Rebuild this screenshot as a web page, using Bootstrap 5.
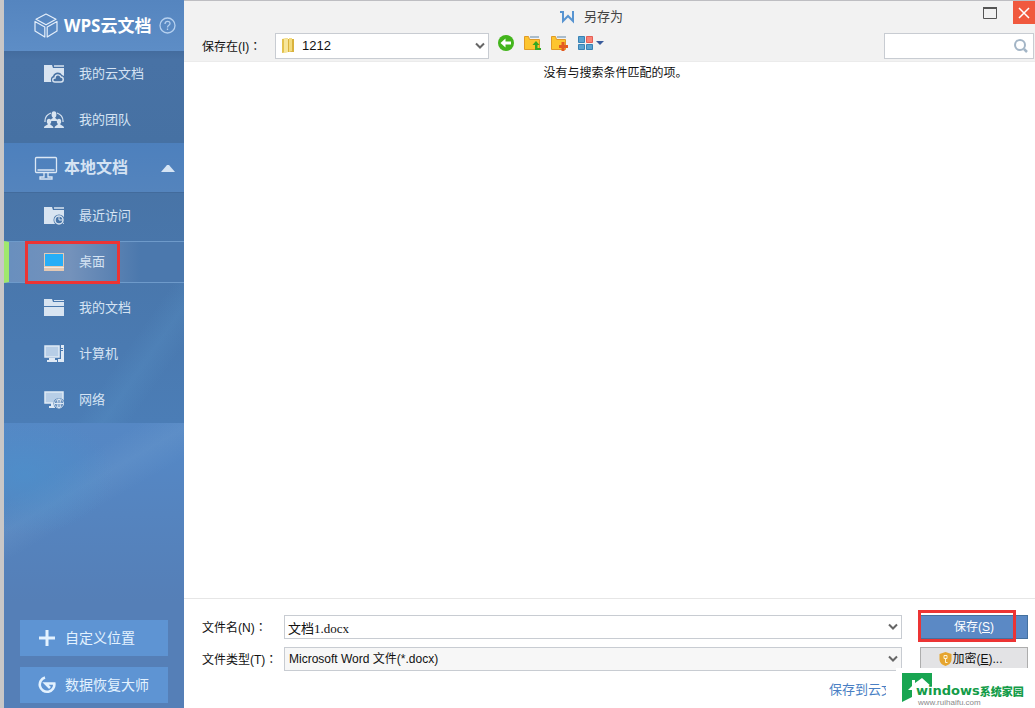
<!DOCTYPE html>
<html lang="zh-CN">
<head>
<meta charset="utf-8">
<meta name="viewport" content="width=device-width, initial-scale=1">
<title>另存为</title>
<link href="https://cdn.jsdelivr.net/npm/bootstrap@5.3.0/dist/css/bootstrap.min.css" rel="stylesheet">
<style>
body{font:12px/18px "Liberation Sans","Noto Sans CJK SC",sans-serif;color:#111;background:#fff}
svg{display:block;flex:none}
.edge{border-left:4px solid #c9c7c7}
.side{width:180px;color:#d5e3f3;background:
 radial-gradient(ellipse 90px 60px at 20px 475px,rgba(75,146,205,.6),transparent),
 linear-gradient(150deg,transparent 40%,rgba(120,165,210,.22) 50%,transparent 60%) 0 380px/100% 200px no-repeat,
 linear-gradient(#5b8cc5,#5587c4 65%,#557fb7 85%)}
.side a{color:inherit;text-decoration:none}
.side-head{height:50px;padding:0 8px 0 30px;gap:6px;font-size:16px;font-weight:700}
.side-head.cloud{height:51px;color:#fff;background:linear-gradient(#5585bf,#5d8dc6);font-family:"Open Sans","Noto Sans CJK SC",sans-serif;font-size:17px}
.side-head.local{background:linear-gradient(#4d80bd,#5484bd);border-bottom:1px solid #426b9c}
.side-group{background:linear-gradient(#446c9e,#4872a5 10%,#4671a3)}
.side-group.places{background:linear-gradient(125deg,transparent 68%,rgba(95,155,205,.2) 76%,transparent 84%),linear-gradient(#4874a7,#4b7db6)}
.side-item{height:46px;padding-left:40px;gap:15px;font-size:13px}
.side-item.current{height:42px;margin:2px 0;padding-left:35px;border:solid #6e9aca;border-width:1px 0;border-left:5px solid #a0e86c;background:linear-gradient(90deg,#698fbe,#7492bb 35%,#4b78ad 75%)}
.mark-box{border:3px solid #ec3434;pointer-events:none}
.mark-place{left:21px;top:0;width:95px;height:43px}
.mark-save{left:-2px;right:12px;top:-5px;height:32px}
.side-btn{height:36px;margin:0 16px;padding:0 18px;gap:9px;background:#5e94d3;color:#e3f2ff;font-size:14px;border:0;border-radius:0}
.side-foot{gap:11px;padding-bottom:5px}
.top-pane{background:#f2f2f2;border-top:1px solid #bebec2;border-bottom:1px solid #ebebeb;height:62px}
.title-row{height:32px;padding-right:36px;font-size:13px;color:#444}
.title-row .window-set{gap:12px}
.tool-row{padding:0 1px 0 18px}
.tool-row label{width:73px}
.tools{gap:10px;padding:0 0 6px 9px}
.colon{font-family:"Noto Sans CJK TC",sans-serif}
.field{height:26px;border:1px solid #c8ccd2;border-radius:0;background-color:#fff;font-size:12px;line-height:18px;color:#111}
.pick{appearance:none;background:#fff url("data:image/svg+xml,%3Csvg xmlns='http://www.w3.org/2000/svg' width='10' height='8'%3E%3Cpath d='M1 1.5l4 4 4-4' fill='none' stroke='%23666' stroke-width='2'/%3E%3C/svg%3E") no-repeat right 3px center}
.pick-folder{width:214px;padding:0 20px 0 26px;font-size:13px}
.folder-ico{left:6px;top:4px}
.tool-btn{background:none;border:0;padding:0}
.window-btn{width:22px;height:23px;border:0;padding:0;background:none}
.window-btn.shut{background:#f0593e}
.find{width:150px}
.notice{padding:2px 0 0 12px}
.bottom-pane{border-top:1px solid #e6e6e6;height:110px;padding:16px 7px 0 18px}
.form-line{height:24px;margin-bottom:8px}
.form-line label{width:82px}
.bottom-pane .field{height:24px}
.file-name{font-family:"Liberation Serif","Noto Sans CJK SC",serif;font-size:13px;padding:0 3px}
.file-type{background-color:#f7f7f7;padding:0 20px 0 4px}
.act{width:108px;height:24px;border-radius:0;font-size:12px;line-height:18px;padding:0}
.act-wrap{margin-left:18px}
.act.save,.act.save:hover{background:#5b89c5;color:#fff;border:1px solid #44719f}
.act.lock,.act.lock:hover{background:#e3e3e5;color:#111;border:1px solid #adadad;padding-right:6px}
.cloud-link{width:57px;margin:2px 142px 0 0;font-size:13px;color:#4a7fc4;text-decoration:none}
.site-tag{right:0;bottom:0;width:139px;height:40px;padding:16px 0 0 20px;background:#fff}
.site-logo{left:6px;top:5px}
.site-name{font:700 13px/14px "DejaVu Sans",sans-serif;color:#139c48}
.site-name span{font:900 11px/14px "Noto Sans CJK SC",sans-serif}
.site-url{padding-left:2px;font-size:8px;line-height:9px;color:#8a8a8a}
</style>
</head>
<body>
<div class="edge d-flex vh-100 overflow-hidden">
<nav class="side d-flex flex-column flex-shrink-0">
  <a href="#" class="side-head cloud d-flex align-items-center">
    <svg width="24" height="25" viewBox="0 0 24 25" fill="none" stroke="#e4eefa" stroke-width="1.200" stroke-linejoin="round"><path d="M12 1l10 5.200-10 5.600L2 6.200zM1 8.500v9.500l9.800 6V14zM23 8.500v9.500l-9.800 6V14z"/></svg>
    <span class="me-auto text-nowrap">WPS云文档</span>
    <svg width="17" height="17" viewBox="0 0 17 17" fill="none" stroke="#b5d0ef" stroke-width="1.300"><circle cx="8.500" cy="8.500" r="7.500"/><path d="M6 7c0-3.500 5-3.500 5-.5 0 2-2.500 1.700-2.500 4M8.500 11.500v1.500"/></svg>
  </a>
  <div class="side-group">
    <a href="#" class="side-item d-flex align-items-center"><svg width="20" height="18" viewBox="0 0 20 18"><path fill="#d8e4f1" d="M0 0h8l1 3h11v14H0z"/><path stroke="#d8e4f1" stroke-width="1.500" d="M10 1h10"/><path fill="#4771a3" d="M8 18c-2-3-1-6 1-7 1-4 7-5 9-1l2 1v7z"/><path fill="none" stroke="#d8e4f1" stroke-width="1.400" d="M11 17c-3 0-3-4 0-4 0-4 5-4 6-1 3 0 3 5 0 5z"/></svg>我的云文档</a>
    <a href="#" class="side-item d-flex align-items-center"><svg width="20" height="18" viewBox="0 0 20 18" fill="#d8e4f1"><path d="M1 11a9 9 0 0 1 6-9M19 11a9 9 0 0 0-6-9" fill="none" stroke="#d8e4f1" stroke-width="1.200"/><ellipse cx="10" cy="3.500" rx="2.400" ry="3.200"/><path d="M6 10c0-2 3-2 3-4h2c0 2 3 2 3 4z"/><ellipse cx="5" cy="10.500" rx="2.200" ry="2.800"/><ellipse cx="15" cy="10.500" rx="2.200" ry="2.800"/><path d="M0 17c0-3 3-2 4-4h2c1 2 3 1 3.500 4zM10.500 17c.5-3 2.500-2 3.500-4h2c1 2 4 1 4 4z"/></svg>我的团队</a>
  </div>
  <a href="#" class="side-head local d-flex align-items-center">
    <svg width="24" height="24" viewBox="0 0 24 24" fill="none" stroke="#dce8f5" stroke-width="1.300"><rect x="1.500" y="1.500" width="21" height="15" rx="1"/><path d="M3.500 14h17M10 17v4H6v2h12v-2h-4v-4"/></svg>
    <span class="me-auto">本地文档</span>
    <svg width="16" height="8" viewBox="0 0 16 8"><path fill="#d5e4f4" d="M1 8l6-7h2l6 7z"/></svg>
  </a>
  <div class="side-group places">
    <a href="#" class="side-item d-flex align-items-center"><svg width="20" height="18" viewBox="0 0 20 18"><path fill="#d8e4f1" d="M0 0h8l1 3h11v14H0z"/><path stroke="#d8e4f1" stroke-width="1.500" d="M10 1h10"/><circle cx="15" cy="13" r="5.500" fill="#4875a8"/><circle cx="15" cy="13" r="4" fill="none" stroke="#d8e4f1" stroke-width="1.500"/><path d="M15 10v3h3" fill="none" stroke="#d8e4f1"/></svg>最近访问</a>
    <div class="position-relative"><a href="#" class="side-item current d-flex align-items-center"><svg width="20" height="18" viewBox="0 0 20 18"><path fill="#e3c9b4" d="M0 0h20v18H0z"/><path fill="#27aef7" d="M1 1h18v12H1z"/><path stroke="#f4e8dc" d="M0 14.500h20"/></svg>桌面</a><span class="mark-box mark-place position-absolute"></span></div>
    <a href="#" class="side-item d-flex align-items-center"><svg width="20" height="18" viewBox="0 0 20 18" fill="#d8e4f1"><path d="M0 0h8l1 3h11v4H0zM10 1h10v1H10zM0 8h20v9H0z"/></svg>我的文档</a>
    <a href="#" class="side-item d-flex align-items-center"><svg width="20" height="18" viewBox="0 0 20 18"><path fill="#b7cee7" stroke="#e0eaf5" stroke-width="1.500" d="M1 1h14v11H1z"/><path fill="#e0eaf5" d="M5 13h6v2h2v2H3v-2h2zM17 0h3v17h-6v-3h3z"/><path stroke="#4a79b0" d="M17 3.500h2M17 5.500h2"/></svg>计算机</a>
    <a href="#" class="side-item d-flex align-items-center"><svg width="20" height="18" viewBox="0 0 20 18"><path fill="#b7cee7" stroke="#e0eaf5" stroke-width="1.500" d="M1 1h18v11H1z"/><path fill="#e0eaf5" d="M7 12h4v5H5v-2h2z"/><circle cx="15" cy="12.500" r="5.500" fill="#4a7ab2"/><g fill="none" stroke="#e0eaf5"><circle cx="15" cy="12.500" r="4.500"/><ellipse cx="15" cy="12.500" rx="2" ry="4.500"/><path d="M10.500 12.500h9M15 8v9"/></g></svg>网络</a>
  </div>
  <div class="side-foot mt-auto d-flex flex-column">
    <button type="button" class="side-btn d-flex align-items-center"><svg width="18" height="18" viewBox="0 0 18 18"><path stroke="#e3f2ff" stroke-width="3" d="M9 1v16M1 9h16"/></svg>自定义位置</button>
    <button type="button" class="side-btn d-flex align-items-center"><svg width="18" height="18" viewBox="0 0 18 18"><path fill="none" stroke="#e3f2ff" stroke-width="2.600" d="M7 1.500a7.300 7.300 0 1 0 9.300 6H7.500l4.500 4.500"/></svg>数据恢复大师</button>
  </div>
</nav>
<main class="flex-grow-1 d-flex flex-column">
  <header class="top-pane position-relative">
    <div class="title-row d-flex align-items-center">
      <div class="flex-fill d-flex justify-content-center align-items-center"><svg class="me-2" width="16" height="14" viewBox="0 0 16 14"><path fill="none" stroke="#5794d1" stroke-width="2" d="M0 2h3v9l5-5 5 5V1"/></svg><span>另存为</span></div>
      <div class="window-set d-flex position-absolute top-0 end-0">
        <button type="button" class="window-btn d-flex align-items-center justify-content-center" aria-label="最大化"><svg width="14" height="12" viewBox="0 0 14 12"><path fill="none" stroke="#555" d="M.5 1.500h13v10H.5z"/><path stroke="#555" stroke-width="2" d="M0 1h14"/></svg></button>
        <button type="button" class="window-btn shut d-flex align-items-center justify-content-center" aria-label="关闭"><svg width="12" height="12" viewBox="0 0 12 12"><path stroke="#fff" stroke-width="1.500" d="M1 1l10 10M11 1L1 11"/></svg></button>
      </div>
    </div>
    <div class="tool-row d-flex align-items-center">
      <label for="where" class="flex-shrink-0">保存在(I)<span class="colon" lang="zh-TW">：</span></label>
      <div class="position-relative"><select id="where" class="field pick pick-folder d-block"><option>1212</option></select>
        <svg class="folder-ico position-absolute" width="14" height="17" viewBox="0 0 14 17"><path fill="#e3c24f" d="M1 2l6-1v14l-6 1z"/><path fill="#f7e69b" d="M3 2l4-1v14l-4 1z"/><path fill="#d9b23d" d="M7 2h6v13H7z"/><path fill="#f3dc80" d="M8 1h3v13l-3 1z"/></svg></div>
      <div class="tools d-flex align-items-center">
        <button type="button" class="tool-btn" aria-label="后退"><svg width="16" height="16" viewBox="0 0 16 16"><circle cx="8" cy="8" r="8" fill="#43b51c"/><path fill="#fff" d="M2.500 8l5-4.500v3H13v3H7.500v3z"/></svg></button>
        <button type="button" class="tool-btn" aria-label="向上"><svg width="17" height="16" viewBox="0 0 17 16"><path fill="#fdc52f" stroke="#e09a26" d="M.5 1.500h4l1 3h10v10H.5z"/><path stroke="#a9bccb" stroke-width="2" d="M6 2h9"/><path fill="#36a823" d="M12 6l3.500 4h-2v3H17v2h-6v-5H8.500z"/></svg></button>
        <button type="button" class="tool-btn" aria-label="新建文件夹"><svg width="17" height="16" viewBox="0 0 17 16"><path fill="#fdc52f" stroke="#e09a26" d="M.5 1.500h4l1 3h9v10H.5z"/><path stroke="#a9bccb" stroke-width="2" d="M6 2h9"/><path stroke="#e35b20" stroke-width="3" d="M12 7v9M8 11.500h9"/></svg></button>
        <button type="button" class="tool-btn" aria-label="视图"><svg width="26" height="16" viewBox="0 0 26 16"><path fill="#5ba3d0" stroke="#3982b4" d="M.5 1.500h6v6h-6zM.5 9.500h6v5h-6zM8.500 9.500h6v5h-6z"/><path fill="#fa8376" stroke="#e55f55" d="M8.500 1.500h6v6h-6z"/><path fill="#3a5c9c" d="M18 6h8l-4 4z"/></svg></button>
      </div>
      <div class="find field d-flex align-items-center ms-auto"><input class="border-0 bg-transparent flex-fill w-100" type="text" aria-label="搜索"><svg class="me-1" width="16" height="16" viewBox="0 0 16 16" fill="none" stroke="#a3b5c6" stroke-width="2"><circle cx="7" cy="7" r="5"/><path stroke-width="2.500" d="M11 11l3 3"/></svg></div>
    </div>
  </header>
  <section class="notice flex-grow-1 text-center"><p class="m-0">没有与搜索条件匹配的项。</p></section>
  <footer class="bottom-pane position-relative">
    <div class="form-line d-flex align-items-center">
      <label for="fname">文件名(N)<span class="colon" lang="zh-TW">：</span></label>
      <input id="fname" class="field pick file-name flex-fill" value="文档1.docx">
      <div class="act-wrap position-relative"><button type="button" class="btn act save d-block">保存(<u>S</u>)</button><span class="mark-box mark-save position-absolute"></span></div>
    </div>
    <div class="form-line d-flex align-items-center">
      <label for="ftype">文件类型(T)<span class="colon" lang="zh-TW">：</span></label>
      <select id="ftype" class="field pick file-type flex-fill"><option>Microsoft Word 文件(*.docx)</option></select>
      <div class="act-wrap"><button type="button" class="btn act lock d-flex align-items-center justify-content-center"><svg width="13" height="14" viewBox="0 0 13 14"><path fill="#e6a52f" d="M6.500 0l6 2v5c0 4-3 6-6 7-3-1-6-3-6-7V2z"/><path fill="none" stroke="#fff3d5" d="M5 3.500h3v3H5zM6.500 6.500v4h2"/></svg>加密(<u>E</u>)...</button></div>
    </div>
    <div class="d-flex justify-content-end"><a href="#" class="cloud-link overflow-hidden text-nowrap">保存到云文</a></div>
    <div class="site-tag position-absolute">
      <svg class="site-logo position-absolute" width="30" height="29" viewBox="0 0 30 29"><path fill="#18a551" d="M0 0h30v14L20 5l-7 5V7H10v6l-4 4h4v7L0 29z"/></svg>
      <div class="site-name position-relative d-flex">windows<span>系统家园</span></div>
      <div class="site-url">www.ruihaifu.com</div>
    </div>
  </footer>
</main>
</div>
<script src="https://cdn.jsdelivr.net/npm/bootstrap@5.3.0/dist/js/bootstrap.bundle.min.js"></script>
</body>
</html>
